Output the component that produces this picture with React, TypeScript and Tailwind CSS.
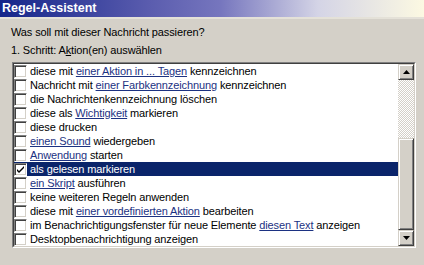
import * as React from "react";

type Part = { t: string; link?: boolean };

const rows: { parts: Part[]; checked?: boolean }[] = [
  { parts: [{ t: "diese mit " }, { t: "einer Aktion in ... Tagen", link: true }, { t: " kennzeichnen" }] },
  { parts: [{ t: "Nachricht mit " }, { t: "einer Farbkennzeichnung", link: true }, { t: " kennzeichnen" }] },
  { parts: [{ t: "die Nachrichtenkennzeichnung löschen" }] },
  { parts: [{ t: "diese als " }, { t: "Wichtigkeit", link: true }, { t: " markieren" }] },
  { parts: [{ t: "diese drucken" }] },
  { parts: [{ t: "einen Sound", link: true }, { t: " wiedergeben" }] },
  { parts: [{ t: "Anwendung", link: true }, { t: " starten" }] },
  { parts: [{ t: "als gelesen markieren" }], checked: true },
  { parts: [{ t: "ein Skript", link: true }, { t: " ausführen" }] },
  { parts: [{ t: "keine weiteren Regeln anwenden" }] },
  { parts: [{ t: "diese mit " }, { t: "einer vordefinierten Aktion", link: true }, { t: " bearbeiten" }] },
  {
    parts: [
      { t: "im Benachrichtigungsfenster für neue Elemente " },
      { t: "diesen Text", link: true },
      { t: " anzeigen" },
    ],
  },
  { parts: [{ t: "Desktopbenachrichtigung anzeigen" }] },
];

function Checkbox({ checked }: { checked?: boolean }) {
  return (
    <div className="flex h-[13px] w-[13px] shrink-0 items-center justify-center border border-t-[#808080] border-l-[#808080] border-b-white border-r-white bg-white shadow-[inset_1px_1px_#404040,inset_-1px_-1px_#d4d0c8]">
      {checked && (
        <svg width="9" height="9" viewBox="0 0 9 9">
          <path d="M1 4 L3 6 L8 1 L8 3 L3 8 L1 6 Z" fill="#000" />
        </svg>
      )}
    </div>
  );
}

function ScrollButton({ down }: { down?: boolean }) {
  return (
    <div className="flex h-[16px] w-[16px] items-center justify-center border border-t-[#d4d0c8] border-l-[#d4d0c8] border-b-[#404040] border-r-[#404040] bg-[#d4d0c8] shadow-[inset_1px_1px_#ffffff,inset_-1px_-1px_#808080]">
      <svg width="7" height="4" viewBox="0 0 7 4">
        {down ? <path d="M0 0 H7 L3.5 4 Z" fill="#000" /> : <path d="M0 4 H7 L3.5 0 Z" fill="#000" />}
      </svg>
    </div>
  );
}

export default function App() {
  return (
    <div className="flex h-[265px] w-[424px] flex-col overflow-hidden bg-[#d4d0c8] font-['Liberation_Sans',Arial,sans-serif] text-[11px] tracking-[-0.12px] text-black">
      <div className="flex h-[17px] items-center bg-[linear-gradient(to_right,#14258a_0%,#5a5cae_35%,#7676be_52%,#d4d4e6_75%,#fcf9e2_100%)] pl-[2px] text-[12.5px] font-bold leading-none tracking-normal text-white">
        Regel-Assistent
      </div>
      <div className="h-[2px] bg-[#e4e1d8]" />
      <div className="flex flex-col pl-[11px] pr-[8px]">
        <div className="mt-[6px] h-[14px] leading-[14px]">Was soll mit dieser Nachricht passieren?</div>
        <div className="mt-[4px] h-[14px] leading-[14px]">
          1. Schritt: A<span className="underline">k</span>tion(en) auswählen
        </div>
        <div className="ml-[1px] mt-[5px] border border-t-[#808080] border-l-[#808080] border-b-white border-r-white">
          <div className="flex border border-t-[#404040] border-l-[#404040] border-b-[#d4d0c8] border-r-[#d4d0c8] bg-white">
            <div className="flex flex-1 flex-col">
              {rows.map((r, i) => (
                <div
                  key={i}
                  className={
                    r.checked
                      ? "flex h-[14px] items-center gap-[3px] bg-[#0a246a] text-white"
                      : "flex h-[14px] items-center gap-[3px]"
                  }
                >
                  <Checkbox checked={r.checked} />
                  <span className="whitespace-nowrap leading-[14px]">
                    {r.parts.map((p, j) =>
                      p.link ? (
                        <span key={j} className="text-[#1c3282] underline">
                          {p.t}
                        </span>
                      ) : (
                        <span key={j}>{p.t}</span>
                      )
                    )}
                  </span>
                </div>
              ))}
            </div>
            <div className="flex w-[16px] flex-col">
              <ScrollButton />
              <div className="flex flex-1 flex-col bg-[repeating-conic-gradient(#d4d0c8_0%_25%,#ffffff_0%_50%)] bg-[length:2px_2px]">
                <div className="h-[58px]" />
                <div className="flex-1 border border-t-[#d4d0c8] border-l-[#d4d0c8] border-b-[#404040] border-r-[#404040] bg-[#d4d0c8] shadow-[inset_1px_1px_#ffffff,inset_-1px_-1px_#808080]" />
              </div>
              <ScrollButton down />
            </div>
          </div>
        </div>
      </div>
    </div>
  );
}
